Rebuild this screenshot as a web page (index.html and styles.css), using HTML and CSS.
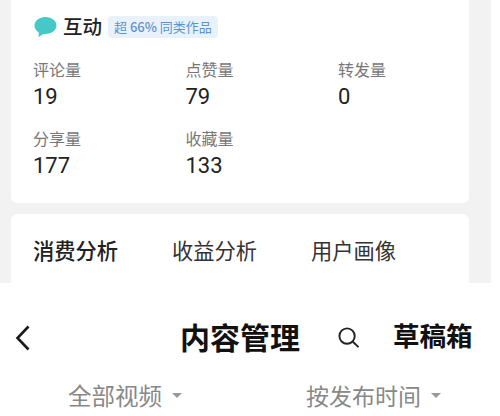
FILE: index.html
```html
<!DOCTYPE html>
<html lang="zh-CN">
<head>
  <meta charset="UTF-8">
  <title>内容管理</title>
  <link rel="stylesheet" href="styles.css">
</head>
<body>
  <div class="top">
    <div class="card stats">
      <div class="stats-head">
        <svg class="bubble" width="23" height="22" viewBox="0 0 23 22">
          <path d="M11.5 1C17.6 1 22.5 4.8 22.5 9.6C22.5 14.4 17.6 18 11.5 18C10.8 18 10.2 18 9.5 17.9L4.6 21C4.6 21 5 17.6 4.7 16.4C2.2 14.9 .5 12.5 .5 9.6C.5 4.8 5.4 1 11.5 1Z" fill="#45c8c6"/>
        </svg>
        <span class="stats-title">互动</span>
        <span class="badge">超 <b>66%</b> 同类作品</span>
      </div>
      <div class="stats-grid">
        <div class="stat"><span class="stat-label">评论量</span><span class="stat-num">19</span></div>
        <div class="stat"><span class="stat-label">点赞量</span><span class="stat-num">79</span></div>
        <div class="stat"><span class="stat-label">转发量</span><span class="stat-num">0</span></div>
        <div class="stat"><span class="stat-label">分享量</span><span class="stat-num">177</span></div>
        <div class="stat"><span class="stat-label">收藏量</span><span class="stat-num">133</span></div>
      </div>
    </div>
    <div class="card tabs">
      <span class="tab tab-active">消费分析</span>
      <span class="tab">收益分析</span>
      <span class="tab">用户画像</span>
    </div>
  </div>

  <div class="nav">
    <svg class="back" width="16" height="28" viewBox="0 0 16 28">
      <path d="M13.5 2.5L2.5 14L13.5 25.5" fill="none" stroke="#1a1a1a" stroke-width="2.6"/>
    </svg>
    <span class="nav-title">内容管理</span>
    <svg class="search" width="24" height="24" viewBox="0 0 24 24">
      <circle cx="10.5" cy="10.5" r="8" fill="none" stroke="#222" stroke-width="2"/>
      <path d="M16.5 16.5L22.5 22" fill="none" stroke="#222" stroke-width="2"/>
    </svg>
    <span class="nav-drafts">草稿箱</span>
  </div>

  <div class="filters">
    <span class="filter filter-type">全部视频<i class="caret"></i></span>
    <span class="filter filter-sort">按发布时间<i class="caret"></i></span>
  </div>
</body>
</html>
```

FILE: styles.css
```css
* { box-sizing: border-box; }
html, body { margin: 0; padding: 0; }
body {
  width: 500px;
  height: 416px;
  overflow: hidden;
  background: #fff;
  color: #222;
  font-family: "Noto Sans CJK SC", "Noto Sans", sans-serif;
}

.top {
  width: 491px;
  height: 283px;
  padding-left: 11px;
  padding-right: 22px;
  background: #f2f2f2;
}
.card { background: #fff; border-radius: 6px; }
.stats { height: 203px; padding: 15px 0 0 22px; border-radius: 0 0 6px 6px; }
.tabs {
  height: 69px;
  margin-top: 11px;
  padding: 18px 0 0 22px;
  display: flex;
  gap: 54px;
  border-radius: 6px 6px 0 0;
}

.stats-head { display: flex; align-items: center; height: 24px; }
.bubble { margin-left: 1px; }
.stats-title { margin: 0 0 2px 6px; width: 45px; font-size: 19.5px; font-weight: 500; line-height: 24px; }
.badge {
  height: 22px;
  padding: 0 6px;
  border-radius: 4px;
  background: #e9f2fb;
  color: #5b93cf;
  font-size: 13px;
  line-height: 22px;
  white-space: nowrap;
}
.badge b { font-weight: 500; }

.stats-grid {
  display: grid;
  grid-template-columns: repeat(3, 152.5px);
  grid-auto-rows: 69px;
  margin-top: 19px;
}
.stat { display: flex; flex-direction: column; }
.stat-label { font-size: 16px; line-height: 23px; color: #777; }
.stat-num { font-size: 22px; line-height: 31px; color: #222; font-family: "Roboto", sans-serif; }

.tab { font-size: 21.25px; line-height: 36px; color: #333; }
.tab-active { font-weight: 500; color: #222; }

.nav { height: 100px; display: flex; align-items: center; padding-top: 10px; }
.back { margin-left: 15px; }
.nav-title { margin: 0 0 5px 149px; font-size: 30px; font-weight: 700; color: #111; line-height: 40px; white-space: nowrap; }
.search { margin-left: 37px; margin-top: -2px; width: 23px; height: 23px; }
.nav-drafts { margin: 0 0 7px 33px; font-size: 26.5px; font-weight: 700; color: #111; line-height: 40px; white-space: nowrap; }

.filters { display: flex; height: 33px; }
.filter { display: flex; align-items: center; font-size: 23.5px; color: #888; height: 32px; margin-top: -4px; white-space: nowrap; }
.filter-type { margin-left: 68px; }
.filter-sort { margin-left: 124px; font-size: 23px; }
.caret {
  margin-left: 10px;
  width: 0;
  height: 0;
  border-left: 5px solid transparent;
  border-right: 5px solid transparent;
  border-top: 5px solid #999;
}
```
